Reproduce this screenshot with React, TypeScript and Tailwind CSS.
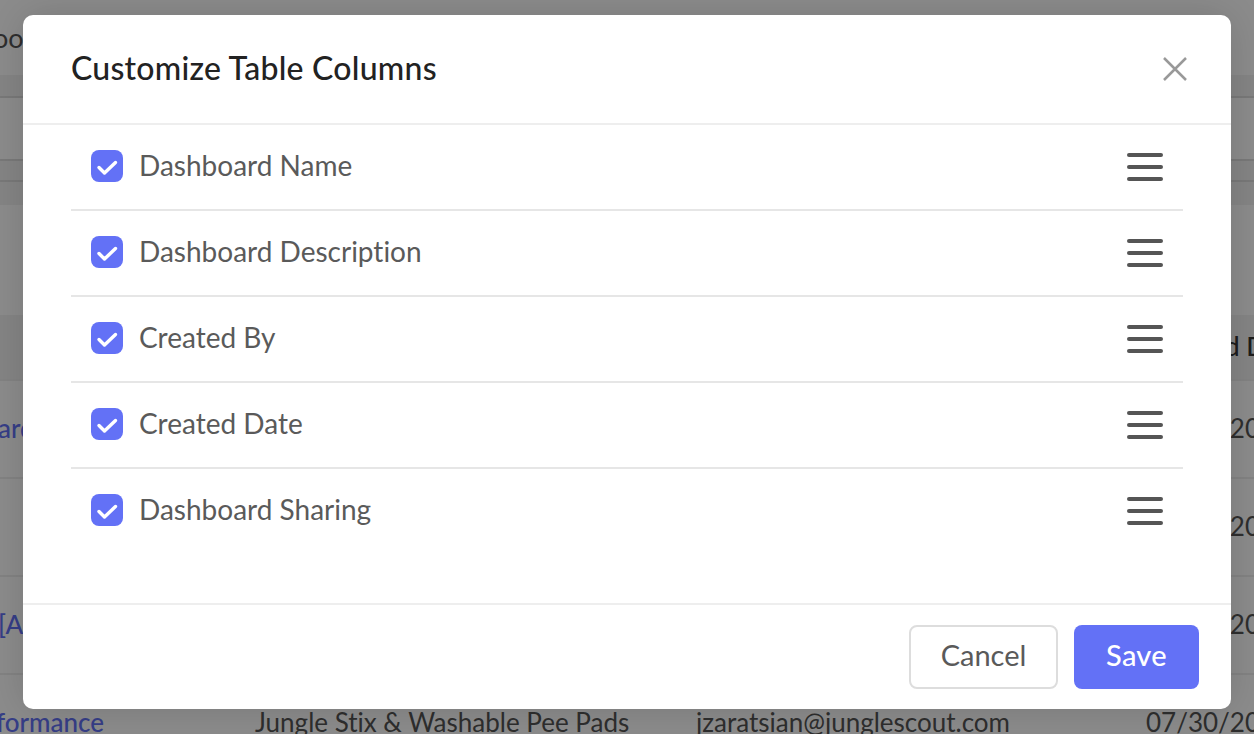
const columns = [
  "Dashboard Name",
  "Dashboard Description",
  "Created By",
  "Created Date",
  "Dashboard Sharing",
];

const CheckBox = () => (
  <span className="mb-[2px] block h-8 w-8 shrink-0 rounded-lg bg-[#6371f6]">
    <svg width="32" height="32" viewBox="0 0 32 32" fill="none">
      <path d="M8 17.5L13.5 23L24.5 12.5" stroke="white" strokeWidth="3.4" strokeLinecap="round" strokeLinejoin="round" />
    </svg>
  </span>
);

const DragHandle = () => (
  <span className="flex w-9 flex-col gap-2">
    <span className="h-1 rounded-full bg-[#555555]" />
    <span className="h-1 rounded-full bg-[#555555]" />
    <span className="h-1 rounded-full bg-[#555555]" />
  </span>
);

const TableRow = ({ first, date }: { first: string; date: string }) => (
  <div className="flex h-[98px] shrink-0 items-center whitespace-nowrap border-b-2 border-[#eeeeee] pb-[2px] text-[26px] text-[#555555]">
    <div className="w-[1146px] shrink-0 overflow-hidden font-medium text-[#6371f6]">
      <span className="-ml-[2px]">{first}</span>
    </div>
    <div className="shrink-0">{date}</div>
  </div>
);

export default function App() {
  return (
    <div className="relative h-[734px] w-[1254px] overflow-hidden bg-white font-['Lato',sans-serif] [font-variant-ligatures:none]">
      {/* page behind the dialog */}
      <div className="flex h-[734px] flex-col">
        <div className="h-[75px] shrink-0 pt-[20px] text-[27px] leading-[36px] text-[#555555]">
          <span className="-ml-[7px] block">oo</span>
        </div>
        <div className="h-[23px] shrink-0 border-b-2 border-[#dddddd] bg-[#f3f3f3]" />
        <div className="h-[63px] shrink-0 border-b-2 border-[#dddddd]" />
        <div className="h-[21px] shrink-0 border-b-2 border-[#dddddd] bg-[#f3f3f3]" />
        <div className="h-[23px] shrink-0 bg-[#f3f3f3]" />
        <div className="h-[110px] shrink-0" />
        <div className="flex h-[66px] shrink-0 items-center justify-end border-b-2 border-[#eeeeee] bg-[#f3f3f3] pb-[2px] text-[26px] font-medium text-[#333333]">
          <span className="w-[29px] overflow-hidden whitespace-nowrap">d Date</span>
        </div>
        <TableRow first="ard" date="07/30/2021" />
        <TableRow first="" date="07/30/2021" />
        <TableRow first="[Ar" date="07/30/2021" />
        <div className="flex h-[59px] shrink-0 items-start whitespace-nowrap pt-[29px] text-[26px] leading-[36px] text-[#555555]">
          <div className="w-[255px] shrink-0 font-medium text-[#6371f6]">
            <span className="block w-[104px] overflow-hidden">
              <span className="float-right">formance</span>
            </span>
          </div>
          <div className="w-[441px] shrink-0">Jungle Stix &amp; Washable Pee Pads</div>
          <div className="w-[450px] shrink-0">jzaratsian@junglescout.com</div>
          <div className="shrink-0">07/30/2021</div>
        </div>
      </div>

      <div className="absolute inset-0 bg-black/45" />

      {/* dialog */}
      <div className="absolute left-[23px] top-[15px] flex h-[694px] w-[1208px] flex-col rounded-[10px] bg-white shadow-[0_0_40px_rgba(0,0,0,0.15)]">
        <div className="flex h-[110px] shrink-0 items-center justify-between border-b-2 border-[#eeeeee] pl-12 pr-[44px]">
          <h2 className="mb-[2px] text-[32px] font-medium tracking-[0.25px] text-[#222222]">Customize Table Columns</h2>
          <svg width="24" height="24" viewBox="0 0 24 24" fill="none">
            <path d="M1 1L23 23M23 1L1 23" stroke="#999999" strokeWidth="2.5" />
          </svg>
        </div>
        <div className="flex-1 px-12">
          {columns.map((name, i) => (
            <div
              key={name}
              className={`flex h-[86px] items-center border-b-2 px-5 ${i < columns.length - 1 ? "border-[#e6e6e6]" : "border-transparent"}`}
            >
              <CheckBox />
              <span className="mb-[5px] ml-4 flex-1 text-[28px] text-[#5a5a5a]">{name}</span>
              <DragHandle />
            </div>
          ))}
        </div>
        <div className="flex h-[106px] shrink-0 items-center justify-end gap-4 border-t-2 border-[#eeeeee] pr-8">
          <button className="h-16 w-[149px] rounded-lg border-2 border-[#dddddd] bg-white pb-[5px] text-[29px] text-[#5a5a5a]">Cancel</button>
          <button className="h-16 w-[125px] rounded-lg bg-[#6371f6] pb-[5px] text-[29px] font-medium tracking-[0.3px] text-white">Save</button>
        </div>
      </div>
    </div>
  );
}
